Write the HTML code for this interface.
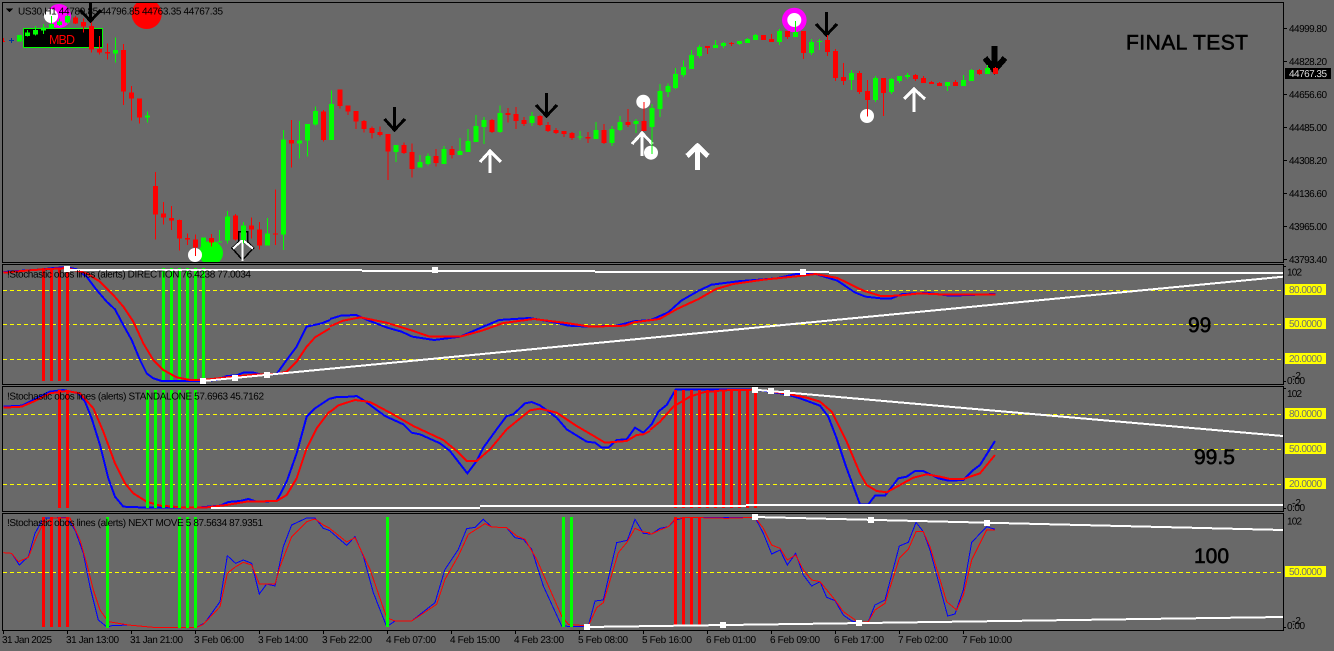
<!DOCTYPE html>
<html lang="en">
<head>
<meta charset="utf-8">
<title>US30,H1</title>
<style>
html,body{margin:0;padding:0;background:#696969;width:1334px;height:651px;overflow:hidden}
svg{display:block}
text{font-family:"Liberation Sans",Arial,sans-serif;font-size:10px;fill:#000}
.b{stroke-width:15;fill:none}
.w{stroke-width:3;fill:none}
.l{fill:none;vector-effect:non-scaling-stroke}
.big{font-size:21px;stroke:#000;stroke-width:.6px}
.yl{fill:#707070}
</style>
</head>
<body>
<svg width="1334" height="651" viewBox="0 0 1334 651" xmlns="http://www.w3.org/2000/svg" shape-rendering="crispEdges">
<defs>
<clipPath id="c1"><rect x="3" y="3" width="1280" height="259"/></clipPath>
<clipPath id="c2"><rect x="3" y="265" width="1280" height="119"/></clipPath>
<clipPath id="c3"><rect x="3" y="387" width="1280" height="124"/></clipPath>
<clipPath id="c4"><rect x="3" y="514" width="1280" height="116"/></clipPath>
</defs>
<rect width="1334" height="651" fill="#696969"/>

<!-- frames -->
<g fill="none" stroke="#000" stroke-width="1">
<rect x="2.5" y="2.5" width="1281" height="260"/>
<rect x="2.5" y="264.5" width="1281" height="120"/>
<rect x="2.5" y="386.5" width="1281" height="125"/>
<rect x="2.5" y="513.5" width="1281" height="117"/>
</g>

<!-- price axis -->
<g fill="#000">
<rect x="1284" y="28" width="3" height="1"/><rect x="1284" y="61" width="3" height="1"/><rect x="1284" y="94" width="3" height="1"/><rect x="1284" y="127" width="3" height="1"/><rect x="1284" y="160" width="3" height="1"/><rect x="1284" y="193" width="3" height="1"/><rect x="1284" y="226" width="3" height="1"/><rect x="1284" y="259" width="3" height="1"/>
<rect x="1284" y="266" width="2" height="1"/><rect x="1284" y="381" width="2" height="1"/><rect x="1284" y="388" width="2" height="1"/><rect x="1284" y="508" width="2" height="1"/><rect x="1284" y="627" width="2" height="1"/>
</g>
<g text-rendering="geometricPrecision">
<text x="1289" y="32" textLength="38">44999.80</text>
<text x="1289" y="65" textLength="38">44828.20</text>
<text x="1289" y="98" textLength="38">44656.60</text>
<text x="1289" y="131" textLength="38">44485.00</text>
<text x="1289" y="164" textLength="38">44308.20</text>
<text x="1289" y="197" textLength="38">44136.60</text>
<text x="1289" y="230" textLength="38">43965.00</text>
<text x="1289" y="263" textLength="38">43793.40</text>
</g>
<rect x="1285" y="68" width="46" height="11" fill="#000"/>
<text x="1289" y="77" textLength="38" style="fill:#ddd" text-rendering="geometricPrecision">44767.35</text>

<!-- main chart -->
<g clip-path="url(#c1)">
<g shape-rendering="auto">
<circle cx="59" cy="16" r="12" fill="#f0f"/>
<circle cx="51" cy="16" r="7" fill="#fff"/>
<circle cx="146.7" cy="14" r="15" fill="#f00"/>
<circle cx="794.3" cy="20" r="12.3" fill="#f0f"/>
<circle cx="794.3" cy="20" r="7" fill="#fff"/>
<circle cx="211" cy="253" r="12" fill="#0f0"/>
<circle cx="195" cy="255" r="7" fill="#fff"/>
<circle cx="643.3" cy="101.7" r="7" fill="#fff"/>
<circle cx="651" cy="152.7" r="7" fill="#fff"/>
<circle cx="867" cy="116" r="7" fill="#fff"/>
</g>
<rect x="23.5" y="28.5" width="79" height="19" fill="#000" stroke="#0f0" stroke-width="1"/>
<text x="49" y="44" textLength="26" style="font-size:12.5px;fill:#f00">MBD</text>

<g fill="none" stroke-linejoin="miter">
<!-- black down arrows -->
<g stroke="#000" stroke-width="3">
<path d="M90.5 2V22M80 10L90.5 21L101 10"/>
<path d="M394.5 107V131M384.5 119L394.5 130L405 119"/>
<path d="M546.5 93V117M536 105L546.5 116L557 105"/>
<path d="M826.5 12V36M816 24L826.5 35L837 24"/>
</g>
<path d="M994.5 46V72" stroke="#000" stroke-width="6"/>
<path d="M985 58L994.5 70L1005 58" stroke="#000" stroke-width="6"/>
<!-- white up arrows -->
<g stroke="#fff" stroke-width="3">
<path d="M490 150V173M480 162L490 151L501 162"/>
<path d="M642 132V156M632 144L642 133L652.500 144"/>
<path d="M914 88V112M904 99L914 89L925 99"/>
</g>
<path d="M697.500 145V170" stroke="#fff" stroke-width="5"/>
<path d="M687 156L697.500 146L708 156" stroke="#fff" stroke-width="5"/>
<!-- combo arrow -->
<path d="M238.500 231.500H247.500V242L253.500 248L242.500 260L232 248L238.500 242Z" stroke="#000" stroke-width="1.500"/>
<path d="M242.500 234V261M233 248.500L242.500 240L253 248.500" stroke="#fff" stroke-width="2.200"/>
</g>

<!-- small left candles -->
<rect x="3" y="38" width="1" height="4" fill="#f00"/><rect x="3" y="41" width="2" height="1" fill="#f00"/>
<rect x="11" y="38" width="1" height="5" fill="#003399"/><rect x="9" y="40" width="5" height="1" fill="#003399"/>

<!-- candles, segment 1 -->
<g transform="translate(.1667 0) scale(.33333)">
<path class="w" stroke="#0f0" d="M82 90V110M106 78V106M130 72V102M154 48V85M178 55V78M202 45V70M346 112V188M442 334V368M658 690V728M682 633V730M730 666V730M802 654V737M850 390V750M898 363V476M922 372V470M946 320V376"/>
<path class="b" stroke="#0f0" d="M58 105V125M82 97V108M106 90V104M130 82V92M154 72V85M178 65V75M202 48V68M346 150V160M442 346V352M610 712V740M658 724V728M682 649V722M730 676V720M802 700V737M850 418V704M898 421V431M922 372V422M946 333V374"/>
<path class="w" stroke="#f00" d="M226 48V72M250 55V98M274 68V158M298 108V163M322 130V178M370 132V315M394 258V362M418 295V370M466 516V718M490 606V674M514 618V690M538 658V752M562 700V735M586 703V768M634 702V740M706 642V722M754 652V716M778 666V748M826 568V735M874 360V503M970 330V425"/>
<path class="b" stroke="#f00" d="M226 52V70M250 66V80M274 78V148M298 147V158M322 156V160M370 150V275M394 277V296M418 295V352M466 558V643M490 640V653M514 654V662M538 660V716M562 714V718M586 718V742M634 714V728M706 646V718M754 676V688M778 688V737M826 700V704M874 420V430M970 334V420"/>
</g>
<!-- candles, segment 2 -->
<g transform="translate(330.5 0) scale(.33333)">
<path class="w" stroke="#0f0" d="M3 272V420M196 435V486M268 465V503M292 460V497M340 438V492M388 414V465M412 387V456M436 345V426M460 351V432M508 316V399M604 336V378M748 393V420M796 366V417M844 378V438M868 348V393M916 357V399M964 312V462M988 252V351M1012 250V291"/>
<path class="b" stroke="#0f0" d="M3 312V420M196 435V456M268 486V503M292 468V492M340 447V492M388 453V465M412 423V456M436 378V426M460 360V381M508 339V396M604 348V369M748 410V412M796 390V417M844 387V429M868 366V390M916 363V372M964 324V381M988 273V327M1012 258V276"/>
<path class="w" stroke="#f00" d="M28 268V326M52 316V345M76 333V387M100 360V398M124 380V416M148 380V410M172 402V540M220 427V462M244 430V533M316 447V500M364 438V476M484 357V399M532 324V368M556 321V387M580 351V378M628 345V378M652 366V396M676 384V402M700 393V411M724 396V420M772 396V429M820 372V432M892 327V381M940 306V393"/>
<path class="b" stroke="#f00" d="M28 268V318M52 316V335M76 333V365M100 363V387M124 384V399M148 396V405M172 402V455M220 435V459M244 456V507M316 468V489M364 447V465M484 360V396M532 339V345M556 342V363M580 360V372M628 348V375M652 375V393M676 390V399M700 393V402M724 399V414M772 411V415M820 390V429M892 366V375M940 363V393"/>
</g>
<!-- candles, segment 3 -->
<g transform="translate(660.1667 0) scale(.33333)">
<path class="w" stroke="#0f0" d="M46 204V267M70 181V231M94 150V207M118 135V174M166 120V144M190 126V144M238 123V135M262 114V129M286 102V120M358 87V135M406 63V111M454 117V165M478 117V150M574 210V270M646 228V306M694 234V282M718 228V249M742 219V237M862 246V273M910 225V258M934 207V243M982 195V222"/>
<path class="b" stroke="#0f0" d="M46 222V264M70 201V225M94 165V207M118 141V168M166 135V144M190 129V138M238 123V132M262 117V129M286 105V120M358 93V126M406 96V111M454 126V159M478 123V126M574 219V240M646 234V300M694 237V276M718 228V243M742 225V231M862 246V258M910 240V258M934 210V243M982 204V222"/>
<path class="w" stroke="#f00" d="M142 138V162M214 126V138M334 102V126M382 93V117M430 93V177M502 105V168M526 147V243M550 189V255M598 213V282M622 240V350M670 234V348M766 222V243M790 228V249M814 243V252M838 246V258M886 240V258M958 207V225M1006 201V222"/>
<path class="b" stroke="#f00" d="M142 138V144M214 129V132M310 105V120M334 117V126M382 93V111M430 93V159M502 120V156M526 153V234M550 231V243M598 219V276M622 273V300M670 234V279M766 225V237M790 234V249M814 246V252M838 249V258M886 246V258M958 210V222M1006 204V222"/>
</g>
</g>

<!-- main labels -->
<path d="M6 8.500H13L9.500 12.500Z" fill="#000"/>
<text x="18" y="14.500" textLength="205" text-rendering="geometricPrecision">US30,H1  44789.85 44796.85 44763.35 44767.35</text>
<text x="1126" y="49.500" textLength="122" class="big" text-rendering="geometricPrecision">FINAL TEST</text>

<!-- pane 2 -->
<g clip-path="url(#c2)">
<g stroke="#ff0" stroke-width="1" stroke-dasharray="4 3">
<path d="M3 290.500H1283M3 324.500H1283M3 359.500H1283"/>
</g>
<g fill="#f00"><rect x="42" y="268" width="3" height="113"/><rect x="50" y="268" width="3" height="113"/><rect x="58" y="268" width="3" height="113"/><rect x="66" y="268" width="3" height="113"/></g>
<g fill="#0f0"><rect x="162" y="268" width="3" height="113"/><rect x="170" y="268" width="3" height="113"/><rect x="178" y="268" width="3" height="113"/><rect x="186" y="268" width="3" height="113"/><rect x="194" y="268" width="3" height="113"/><rect x="202" y="268" width="3" height="113"/></g>
<g transform="translate(0 260) scale(.33333)">
<polyline class="l" stroke="#00f" stroke-width="2" points="10,36 70,32 130,28 160,24 200,22 230,28 260,50 290,90 320,125 345,148 370,195 395,240 420,300 440,340 460,355 485,363 600,363 650,360 680,348 710,346 730,338 760,338 790,345 830,342 860,300 890,260 920,200 965,190 990,180"/>
<polyline class="l" stroke="#f00" stroke-width="2" points="10,38 100,30 200,24 260,40 300,65 340,105 370,140 400,185 430,250 460,300 490,330 530,352 570,360 610,360 680,352 760,344 830,342 860,335 890,305 920,260 945,232 990,205"/>
</g>
<g transform="translate(330 264) scale(.43367 .33333)">
<polyline class="l" stroke="#00f" stroke-width="2" points="0,165 25,155 60,153 90,170 130,190 165,203 190,218 240,228 300,218 350,190 390,168 460,162 510,173 550,185 600,188 660,185 700,172 740,168 780,145 810,110 850,80 880,62 940,52 1030,43 1075,30 1120,30 1170,50 1210,85 1235,98 1270,103 1295,103 1320,90 1380,87 1430,95 1535,90"/>
<polyline class="l" stroke="#f00" stroke-width="2" points="0,187 30,170 70,160 130,176 190,200 230,218 300,218 350,200 400,177 470,165 550,178 600,188 680,185 700,175 760,165 800,135 850,105 890,75 930,60 1000,47 1075,37 1120,30 1170,42 1230,80 1270,96 1310,95 1360,88 1420,92 1535,91"/>
</g>
<g fill="#fff">
<rect x="67" y="269" width="295" height="2"/><rect x="362" y="270" width="233" height="2"/><rect x="595" y="271" width="234" height="2"/><rect x="829" y="272" width="454" height="2"/>
<rect x="64" y="266" width="6" height="6"/><rect x="432" y="267" width="6" height="6"/><rect x="800" y="269" width="6" height="6"/>
</g>
<line x1="203" y1="381" x2="1283" y2="276.700" stroke="#fff" stroke-width="2"/>
<g fill="#fff"><rect x="200" y="378" width="6" height="6"/><rect x="232" y="375" width="6" height="6"/><rect x="264" y="372" width="6" height="6"/></g>
<text x="7" y="277.500" textLength="244" text-rendering="geometricPrecision">!Stochastic obos lines (alerts) DIRECTION 76.4238 77.0034</text>
<text x="1188" y="332" class="big" text-rendering="geometricPrecision">99</text>
</g>

<!-- pane 3 -->
<g clip-path="url(#c3)">
<g stroke="#ff0" stroke-width="1" stroke-dasharray="4 3">
<path d="M3 414.500H1283M3 449.500H1283M3 484.500H1283"/>
</g>
<g transform="translate(0 385) scale(.33333)">
<polyline class="l" stroke="#00f" stroke-width="2" points="10,65 65,62 100,45 150,20 190,15 235,25 255,50 275,100 300,180 325,280 345,335 370,365 420,367 590,368 660,362 685,351 720,348 745,342 770,350 830,348 860,290 890,205 920,95 945,70 990,40"/>
<polyline class="l" stroke="#f00" stroke-width="2" points="10,68 65,65 100,50 150,25 200,18 240,25 280,70 310,140 345,235 375,295 400,325 440,350 480,362 560,368 620,367 680,360 740,350 830,348 860,330 890,280 920,190 950,130 980,90 990,78"/>
</g>
<g transform="translate(330 386) scale(.33333)">
<polyline class="l" stroke="#00f" stroke-width="2" points="0,38 20,33 65,32 80,30 100,42 165,90 220,115 245,140 270,145 330,172 360,195 412,262 440,225 460,185 500,130 530,90 550,85 585,52 605,48 630,58 680,95 710,130 770,167 795,170 815,185 835,185 860,162 890,160 915,125 940,140 960,120"/>
<polyline class="l" stroke="#f00" stroke-width="2" points="0,78 25,58 75,42 120,48 180,80 250,120 340,162 380,195 410,225 440,225 480,190 530,130 600,73 630,68 680,80 740,120 800,155 825,170 890,165 920,147 940,145 960,135"/>
</g>
<g transform="translate(640 385) scale(.33333)">
<polyline class="l" stroke="#00f" stroke-width="2" points="30,122 35,118 55,80 80,60 107,14 275,14 350,14 390,20 440,28 480,40 540,62 565,95 590,160 620,250 660,358 685,358 705,332 735,332 775,280 800,275 825,258 850,258 895,280 925,287 970,285 1000,255 1020,240 1065,168"/>
<polyline class="l" stroke="#f00" stroke-width="2" points="30,135 60,110 100,65 150,35 190,22 250,16 345,14 390,18 440,26 500,38 540,50 575,80 620,170 660,265 680,300 710,318 740,322 780,300 820,278 860,268 900,275 930,282 970,282 1020,265 1065,210"/>
</g>
<g fill="#f00"><rect x="58" y="390" width="3" height="118"/><rect x="66" y="390" width="3" height="118"/>
<rect x="674" y="390" width="3" height="118"/><rect x="682" y="390" width="3" height="118"/><rect x="690" y="390" width="3" height="118"/><rect x="698" y="390" width="3" height="118"/><rect x="706" y="390" width="3" height="118"/><rect x="714" y="390" width="3" height="118"/><rect x="722" y="390" width="3" height="118"/><rect x="730" y="390" width="3" height="118"/><rect x="738" y="390" width="3" height="118"/><rect x="746" y="390" width="3" height="118"/><rect x="754" y="390" width="3" height="118"/></g>
<g fill="#0f0"><rect x="146" y="390" width="3" height="118"/><rect x="154" y="390" width="3" height="118"/><rect x="162" y="390" width="3" height="118"/><rect x="170" y="390" width="3" height="118"/><rect x="178" y="390" width="3" height="118"/><rect x="186" y="390" width="3" height="118"/><rect x="194" y="390" width="3" height="118"/></g>
<g fill="#fff"><rect x="211" y="507" width="269" height="2"/><rect x="480" y="505" width="266" height="2"/><rect x="746" y="504" width="537" height="2"/>
<rect x="752" y="387" width="6" height="6"/><rect x="768" y="388" width="6" height="6"/><rect x="784" y="390" width="6" height="6"/></g>
<line x1="755" y1="389.700" x2="1283" y2="436" stroke="#fff" stroke-width="2"/>
<text x="7" y="399.500" textLength="257" text-rendering="geometricPrecision">!Stochastic obos lines (alerts) STANDALONE 57.6963 45.7162</text>
<text x="1194" y="464" class="big" text-rendering="geometricPrecision">99.5</text>
</g>

<!-- pane 4 -->
<g clip-path="url(#c4)">
<path d="M3 572.500H1283" stroke="#ff0" stroke-width="1" stroke-dasharray="4 3"/>
<g transform="translate(0 510) scale(.33333)">
<polyline class="l" stroke="#00f" stroke-width="1" points="10,128 35,130 58,165 85,140 105,70 130,25 200,22 225,60 250,130 270,230 295,330 322,352 335,347 385,345 460,352 590,352 615,338 660,275 682,137 707,160 730,150 755,160 778,252 800,222 825,228 850,110 875,45 920,24 945,24 970,55 990,62"/>
<polyline class="l" stroke="#f00" stroke-width="1" points="10,128 35,130 55,155 85,142 110,80 130,40 160,24 210,24 240,90 260,160 280,240 300,300 325,335 385,345 460,352 590,352 610,343 660,290 682,190 707,170 730,157 755,165 778,222 825,222 840,170 875,80 920,35 945,27 970,45 990,55"/>
</g>
<g transform="translate(330 386) scale(.33333)">
<polyline class="l" stroke="#00f" stroke-width="1" points="0,435 50,478 75,452 100,510 130,620 170,722 195,705 245,705 315,650 345,550 385,490 410,428 435,424 460,400 485,423 530,425 555,455 580,460 605,490 640,600 695,720 735,722 775,720 795,645 820,642 860,470 892,463 915,400 940,442 960,444"/>
<polyline class="l" stroke="#f00" stroke-width="1" points="0,428 50,468 75,455 120,550 170,695 195,705 245,705 320,655 345,580 385,510 415,445 465,413 485,423 530,425 560,450 585,460 620,520 695,690 715,715 775,720 800,665 820,650 865,500 890,470 915,427 940,438 960,440"/>
</g>
<g transform="translate(560 510) scale(.33333)">
<polyline class="l" stroke="#00f" stroke-width="1" points="265,72 275,72 300,55 325,50 345,30 380,22 500,22 585,22 610,70 635,132 660,120 682,165 707,130 730,195 755,228 780,215 800,262 825,272 850,315 875,333 897,338 925,335 945,285 975,270 1018,108 1045,97 1068,37 1090,65 1110,120 1163,318 1185,312 1210,240 1235,97 1280,50 1305,58"/>
<polyline class="l" stroke="#f00" stroke-width="1" points="265,70 275,72 300,60 325,50 345,27 380,22 500,25 585,22 610,55 635,105 660,115 682,150 707,135 730,180 755,210 780,215 825,270 850,305 897,338 925,335 945,300 975,280 1018,145 1045,118 1068,65 1090,65 1110,110 1160,275 1190,300 1210,255 1235,150 1280,60 1305,60"/>
</g>
<g fill="#f00"><rect x="42" y="517" width="3" height="110"/><rect x="50" y="517" width="3" height="110"/><rect x="58" y="517" width="3" height="110"/><rect x="66" y="517" width="3" height="110"/>
<rect x="674" y="517" width="3" height="108"/><rect x="682" y="517" width="3" height="108"/><rect x="690" y="517" width="3" height="108"/><rect x="698" y="517" width="3" height="108"/></g>
<g fill="#0f0"><rect x="106" y="517" width="3" height="111"/><rect x="178" y="517" width="3" height="111"/><rect x="186" y="517" width="3" height="111"/><rect x="194" y="517" width="3" height="111"/><rect x="386" y="517" width="3" height="110"/><rect x="562" y="517" width="3" height="110"/><rect x="570" y="517" width="3" height="110"/></g>
<line x1="755" y1="517" x2="1283" y2="530" stroke="#fff" stroke-width="2"/>
<line x1="587" y1="627" x2="1283" y2="617" stroke="#fff" stroke-width="2"/>
<g fill="#fff"><rect x="752" y="514" width="6" height="6"/><rect x="868" y="517" width="6" height="6"/><rect x="984" y="520" width="6" height="6"/>
<rect x="584" y="624" width="6" height="6"/><rect x="720" y="622" width="6" height="6"/><rect x="856" y="620" width="6" height="6"/></g>
<text x="7" y="526" textLength="256" text-rendering="geometricPrecision">!Stochastic obos lines (alerts) NEXT MOVE 5 87.5634 87.9351</text>
<text x="1194" y="563" class="big" text-rendering="geometricPrecision">100</text>
</g>

<!-- indicator axes -->
<g fill="#ff0">
<rect x="1285" y="284" width="41" height="11"/><rect x="1285" y="318" width="41" height="11"/><rect x="1285" y="353" width="41" height="11"/>
<rect x="1285" y="408" width="41" height="11"/><rect x="1285" y="443" width="41" height="11"/><rect x="1285" y="478" width="41" height="11"/>
<rect x="1285" y="566" width="41" height="11"/>
</g>
<g text-rendering="geometricPrecision">
<text class="yl" x="1289" y="293" textLength="33">80.0000</text>
<text class="yl" x="1289" y="327" textLength="33">50.0000</text>
<text class="yl" x="1289" y="362" textLength="33">20.0000</text>
<text class="yl" x="1289" y="417" textLength="33">80.0000</text>
<text class="yl" x="1289" y="452" textLength="33">50.0000</text>
<text class="yl" x="1289" y="487" textLength="33">20.0000</text>
<text class="yl" x="1289" y="575" textLength="33">50.0000</text>
<text x="1287" y="275.500" textLength="15">102</text>
<text x="1287" y="397" textLength="15">102</text>
<text x="1287" y="524.500" textLength="15">102</text>
<text x="1287" y="384" textLength="18">0:00</text><text x="1292" y="379">-2</text>
<text x="1287" y="511" textLength="18">0:00</text><text x="1292" y="506">-2</text>
<text x="1287" y="629" textLength="18">0:00</text><text x="1292" y="624">-2</text>
</g>

<!-- time axis -->
<path d="M3 631v3M67 631v3M131 631v3M195 631v3M259 631v3M323 631v3M387 631v3M451 631v3M515 631v3M579 631v3M643 631v3M707 631v3M771 631v3M835 631v3M899 631v3M963 631v3" stroke="#000" stroke-width="1" transform="translate(.5 0)"/>
<g text-rendering="geometricPrecision">
<text x="2" y="643" textLength="50">31 Jan 2025</text>
<text x="66" y="643" textLength="53">31 Jan 13:00</text>
<text x="130" y="643" textLength="53">31 Jan 21:00</text>
<text x="194" y="643" textLength="50">3 Feb 06:00</text>
<text x="258" y="643" textLength="50">3 Feb 14:00</text>
<text x="322" y="643" textLength="50">3 Feb 22:00</text>
<text x="386" y="643" textLength="50">4 Feb 07:00</text>
<text x="450" y="643" textLength="50">4 Feb 15:00</text>
<text x="514" y="643" textLength="50">4 Feb 23:00</text>
<text x="578" y="643" textLength="50">5 Feb 08:00</text>
<text x="642" y="643" textLength="50">5 Feb 16:00</text>
<text x="706" y="643" textLength="50">6 Feb 01:00</text>
<text x="770" y="643" textLength="50">6 Feb 09:00</text>
<text x="834" y="643" textLength="50">6 Feb 17:00</text>
<text x="898" y="643" textLength="50">7 Feb 02:00</text>
<text x="962" y="643" textLength="50">7 Feb 10:00</text>
</g>
</svg>
</body>
</html>
